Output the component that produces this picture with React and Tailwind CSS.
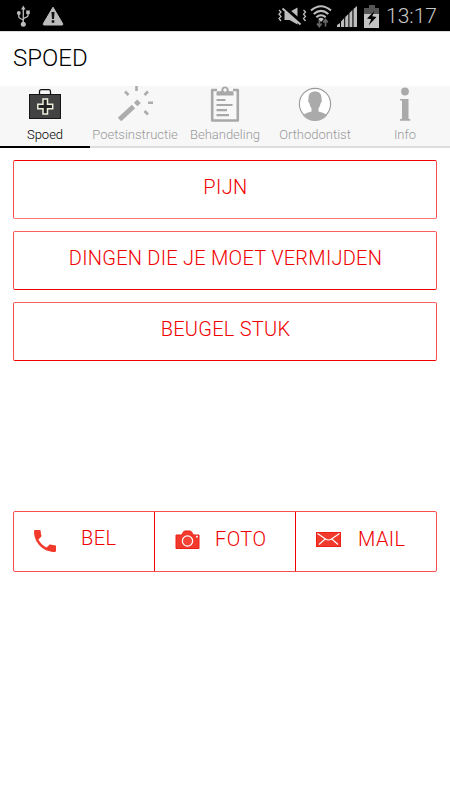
import React from "react";

function UsbIcon() {
  return (
    <svg className="h-[22px] w-[16px]" viewBox="0 0 16 22" fill="none" stroke="#bdbdbd" strokeWidth="1.3">
      <path d="M7.3 4v15M2.8 9v3c0 2 4.5 1.5 4.5 4M12 7.500v3.200c0 2-4.700 1.500-4.700 4" />
      <path d="M7.300 0.500l2.200 4H5.100z" fill="#bdbdbd" stroke="none" />
      <circle cx="2.800" cy="8" r="1.900" fill="#bdbdbd" stroke="none" />
      <rect x="10.200" y="5.500" width="3.600" height="3.600" fill="#bdbdbd" stroke="none" />
      <circle cx="7.300" cy="19.200" r="2.500" fill="#bdbdbd" stroke="none" />
    </svg>
  );
}

function WarningIcon() {
  return (
    <svg className="h-[20px] w-[22px]" viewBox="0 0 22 20">
      <path d="M11 1.200L20.600 17.500q.8 1.500-.8 1.500H2.200q-1.600 0-.8-1.500z" fill="#bdbdbd" stroke="#bdbdbd" strokeLinejoin="round" />
      <path d="M9.500 6h3l-.5 7h-2zM9.700 14.300h2.600v2.400H9.700z" fill="#111" />
    </svg>
  );
}

function MuteIcon() {
  return (
    <svg className="h-[20px] w-[30px]" viewBox="0 0 30 20">
      <path d="M7.500 6h5l8-4.500v17l-8-4.500h-5z" fill="#bdbdbd" />
      <path d="M6 .500L25 17" stroke="#000" strokeWidth="4" />
      <path d="M5.500 2.500L23.500 18.500" stroke="#bdbdbd" strokeWidth="2" />
      <path d="M2 4l2 2-2 2.200 2 2.200-2 2.100 2 2.500M26.500 4l2 2-2 2.200 2 2.200-2 2.100 2 2.500" fill="none" stroke="#bdbdbd" strokeWidth="1.300" />
    </svg>
  );
}

function WifiIcon() {
  return (
    <svg className="h-[23px] w-[22px]" viewBox="0 0 22 23" fill="none">
      <path d="M1 5.500Q11-3 21 5.500M3.700 9Q11 2.800 18.300 9M6.300 12.300Q11 8.200 15.700 12.300" stroke="#bdbdbd" strokeWidth="2.100" />
      <path d="M8.200 14Q11 11.500 13.800 14L11 17z" fill="#bdbdbd" />
      <path d="M9.300 15v6M7 18.500l2.300 3 2.300-3M15.500 21.500V15M13.200 17.500l2.300-3 2.300 3" stroke="#666" strokeWidth="1.700" />
    </svg>
  );
}

function SignalIcon() {
  return (
    <svg className="h-[21px] w-[20px]" viewBox="0 0 20 21">
      <path d="M0 21v-2l3-2v4zM4 21v-5.500L7.200 12v9zM8.200 21V11l3.200-3v13zM12.400 21V7l3-3v17zM16.500 21V3L20 0v21z" fill="#bdbdbd" />
    </svg>
  );
}

function BatteryIcon() {
  return (
    <svg className="h-[23px] w-[16px]" viewBox="0 0 16 23">
      <path d="M5 0h6v3h4v6H0V3h5z" fill="#555" />
      <path d="M0 9h15v14H0z" fill="#c4c4c4" />
      <path d="M10.500 6L3 13.500l4.200.7L4.500 20.500 12.500 12l-4.300-.8z" fill="#000" />
    </svg>
  );
}

function CaseIcon() {
  return (
    <svg className="h-[35px] w-[36px]" viewBox="0 0 36 35">
      <path d="M12.500 8V5.500q0-1.800 1.800-1.800h7.400q1.800 0 1.800 1.800V8" fill="none" stroke="#111" strokeWidth="1.300" />
      <rect x="2.500" y="8.500" width="31" height="24" fill="#424242" stroke="#161616" />
      <path d="M16 13h4.500v5.200h5.200v4.500h-5.200v5.200H16v-5.200h-5.200v-4.500H16z" fill="#222" stroke="#eeeedf" strokeWidth="1.500" />
    </svg>
  );
}

function WandIcon() {
  return (
    <svg className="h-[35px] w-[36px]" viewBox="0 0 36 35" fill="none" stroke="#acacac">
      <path d="M2.500 33.500L16.500 20.500M18.700 18.500l3.300-3.300" strokeWidth="5" />
      <path d="M19.500 0v5M8 5.500l3.500 3.500M31 5.500L27.500 9M31 16.800h5M27.500 25l3.500 3.500" strokeWidth="2.600" />
    </svg>
  );
}

function ClipboardIcon() {
  return (
    <svg className="h-[36px] w-[30px]" viewBox="0 0 30 36">
      <path d="M7 4H2.200v30.500h25.600V4H23" fill="none" stroke="#a8a8a8" strokeWidth="2.600" strokeLinejoin="round" />
      <path fillRule="evenodd" d="M6.500 9.500V6.500q0-1.300 1.500-1.300h2.500q.8 0 .8-.8Q11.600.5 15 .5t3.700 3.700q0 1 .800 1H22q1.500 0 1.500 1.300v3zM15 2.300a1.700 1.700 0 1 0 .1 0z" fill="#a8a8a8" />
      <path d="M6.500 14h9M6.500 19H22.500M6.500 24.200h10.500M6.500 29.200H19" stroke="#a8a8a8" strokeWidth="2.200" />
    </svg>
  );
}

function PersonIcon() {
  return (
    <svg className="mt-px h-[34px] w-[34px]" viewBox="0 0 34 34">
      <circle cx="17" cy="17" r="15.600" fill="#fff" stroke="#999" strokeWidth="1.100" />
      <path d="M17 4.500c4.800 0 6.800 2.800 6.500 7.700.8 1.300.2 3.500-1 4-.3 2-.9 3.700-2 5v3.300c3.500 1.300 6.600 1.700 8.600 3.800A15.500 15.500 0 0 1 4.900 28.300c2-2.100 5.100-2.500 8.600-3.800v-3.300c-1.100-1.300-1.700-3-2-5-1.200-.5-1.800-2.700-1-4C10.200 7.300 12.200 4.500 17 4.500z" fill="#aaa" />
    </svg>
  );
}

function InfoIcon() {
  return (
    <svg className="mt-px h-[34px] w-[12px]" viewBox="0 0 12 34" fill="#aaa">
      <circle cx="6" cy="4.500" r="3.900" />
      <path d="M1 12h8.500v19.700l1.800.6v1.400H1v-1.400l2-.6V13.800l-2-.5z" />
    </svg>
  );
}

function PhoneIcon() {
  return (
    <svg className="h-[22px] w-[22px]" viewBox="3 3 18 18">
      <path d="M6.620 10.790c1.440 2.830 3.760 5.140 6.590 6.590l2.200-2.200c.27-.27.67-.36 1.020-.24 1.120.37 2.330.57 3.570.57.550 0 1 .450 1 1V20c0 .550-.450 1-1 1C10.610 21 3 13.390 3 4c0-.550.450-1 1-1h3.500c.550 0 1 .450 1 1 0 1.250.2 2.450.57 3.570.110.350.030.740-.250 1.020z" fill="#f13a2c" />
    </svg>
  );
}

function CameraIcon() {
  return (
    <svg className="h-[20px] w-[25px]" viewBox="0 0 25 20">
      <path d="M1 5h4.500q1.300 0 2-1.500Q8.500 1 10 1h5q1.500 0 2.500 2.500.7 1.500 2 1.500H24v13.500H1z" fill="#f13a2c" stroke="#ec2018" strokeLinejoin="round" />
      <circle cx="12.500" cy="11" r="5.100" fill="none" stroke="#fff" strokeWidth="1.300" />
      <circle cx="12.500" cy="11" r="3.800" fill="#f34639" />
      <path d="M21 5.800h1.800v1.700H21z" fill="#fff" />
    </svg>
  );
}

function MailIcon() {
  return (
    <svg className="h-[15px] w-[25px]" viewBox="0 0 25 15">
      <rect x=".500" y=".500" width="24" height="14" fill="#f13a2c" stroke="#ec2018" />
      <path d="M1.500 1.500l8 5.500q3 2 6 0l8-5.500M3 12.500L9.200 7M22 12.500L15.800 7" fill="none" stroke="#fff" strokeWidth="1.100" />
    </svg>
  );
}

const tabs = [
  { label: "Spoed", Icon: CaseIcon },
  { label: "Poetsinstructie", Icon: WandIcon },
  { label: "Behandeling", Icon: ClipboardIcon },
  { label: "Orthodontist", Icon: PersonIcon },
  { label: "Info", Icon: InfoIcon },
];

const topics = [
  { label: "PIJN", style: "border-t-[#ee0000] border-b-[#ff7777] tracking-[0.4px]" },
  { label: "DINGEN DIE JE MOET VERMIJDEN", style: "border-t-[#f96060] border-b-[#ee0000] tracking-[0.25px]" },
  { label: "BEUGEL STUK", style: "border-t-[#f96060] border-b-[#ee0000] tracking-[0.25px]" },
];

export default function App() {
  return (
    <main className="flex h-[800px] w-[450px] flex-col overflow-hidden bg-white font-['Roboto',sans-serif]">
      <header>
        <div className="flex h-[31px] items-center bg-black text-[#bdbdbd]">
          <div className="ml-4"><UsbIcon /></div>
          <div className="ml-[10px]"><WarningIcon /></div>
          <div className="ml-auto mt-px"><MuteIcon /></div>
          <div className="ml-[3px] mt-px"><WifiIcon /></div>
          <div className="ml-[5px] mt-px"><SignalIcon /></div>
          <div className="ml-[7px] mt-px"><BatteryIcon /></div>
          <span className="ml-[6px] mr-[12px] mt-[2px] w-[52px] whitespace-nowrap text-[21px] font-light text-[#c8c8c8]">13:17</span>
        </div>
        <h1 className="flex h-[55px] items-center border-t border-[#ddd] pb-[2px] pl-[13px] text-[24px] font-light text-black">SPOED</h1>
        <nav className="grid h-[62px] grid-cols-5 bg-[#f7f7f7]">
          {tabs.map(({ label, Icon }, i) => (
            <button
              key={label}
              className={
                "flex flex-col items-center whitespace-nowrap border-b-2 text-[13px] leading-[16px] font-light " +
                (i === 0 ? "border-black text-black" : "border-[#dedede] text-[#999]")
              }
            >
              <span className="flex h-[36px] items-start"><Icon /></span>
              <span className="mt-[5px]">{label}</span>
            </button>
          ))}
        </nav>
      </header>
      <section className="mt-[12px] flex flex-col gap-[12px] px-[13px]">
        {topics.map(({ label, style }) => (
          <button
            key={label}
            className={"flex h-[59px] justify-center rounded-[2px] border border-x-[#f75050] pt-[14px] pl-px text-[20px] leading-[24px] font-light text-[#f00000] " + style}
          >
            {label}
          </button>
        ))}
      </section>
      <section className="mx-[13px] mt-[150px] flex h-[61px] rounded-[2px] border border-[#f75050] text-[20px] font-light leading-[24px] tracking-[0.4px] text-[#f00000]">
        <button className="flex w-[141px] items-start border-r border-r-[#ee0000]">
          <span className="ml-[20px] mt-[18px]"><PhoneIcon /></span>
          <span className="ml-[25px] mt-[14px]">BEL</span>
        </button>
        <button className="flex w-[141px] items-start border-r border-r-[#ee0000]">
          <span className="ml-[20px] mt-[18px]"><CameraIcon /></span>
          <span className="ml-[15px] mt-[15px]">FOTO</span>
        </button>
        <button className="flex flex-1 items-start">
          <span className="ml-[20px] mt-[20px]"><MailIcon /></span>
          <span className="ml-[17px] mt-[15px]">MAIL</span>
        </button>
      </section>
    </main>
  );
}
